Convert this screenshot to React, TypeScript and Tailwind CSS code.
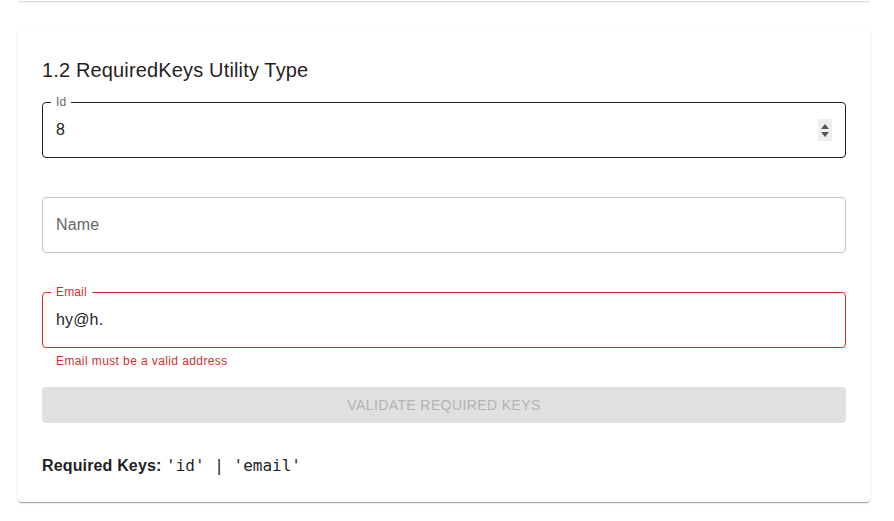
import React from "react";

const sans = "font-['Liberation_Sans',Arial,sans-serif]";

function SpinButtons() {
  return (
    <div className="flex h-[22px] w-[14px] flex-col items-center justify-center gap-[3px] bg-[#eeeeee]">
      <svg width="8" height="5" viewBox="0 0 8 5">
        <path d="M4 0 L8 5 L0 5 Z" fill="#555" />
      </svg>
      <svg width="8" height="5" viewBox="0 0 8 5">
        <path d="M0 0 L8 0 L4 5 Z" fill="#555" />
      </svg>
    </div>
  );
}

interface FieldProps {
  label: string;
  value?: string;
  state?: "hover" | "idle" | "error";
  helper?: string;
  number?: boolean;
}

function Field({ label, value, state = "idle", helper, number }: FieldProps) {
  const borderColor =
    state === "error"
      ? "border-[#d32f2f]"
      : state === "hover"
      ? "border-[#212121]"
      : "border-[#c4c4c4]";
  const labelColor = state === "error" ? "text-[#d32f2f]" : "text-[#666666]";

  return (
    <div className="flex flex-col">
      <div
        className={`relative flex h-[56px] items-center rounded-[4px] border ${borderColor} pl-[13px] pr-[13px]`}
      >
        {value !== undefined ? (
          <>
            <span
              className={`absolute -top-[10px] left-[8px] bg-white px-[5px] text-[12px] leading-[18px] tracking-[0.15px] ${labelColor}`}
            >
              {label}
            </span>
            <span className="flex-1 text-[16px] tracking-[0.15px] text-[#1f1f1f]">
              {value}
            </span>
          </>
        ) : (
          <span className="flex-1 text-[16px] tracking-[0.15px] text-[#666666]">
            {label}
          </span>
        )}
        {number && <SpinButtons />}
      </div>
      <div className="mt-[3px] h-[20px] pl-[14px] text-[12px] leading-[20px] tracking-[0.4px] text-[#d32f2f]">
        {helper}
      </div>
    </div>
  );
}

export default function App() {
  return (
    <div className={`min-h-[521px] bg-white ${sans}`}>
      <div className="flex flex-col gap-[29px] pl-[18px]">
        <div className="h-px w-[852px] rounded-b-[4px] bg-white shadow-[0_2px_1px_-1px_rgba(0,0,0,0.2),0_1px_1px_0_rgba(0,0,0,0.14),0_1px_3px_0_rgba(0,0,0,0.12)]" />

        <div className="flex w-[852px] flex-col gap-4 rounded-[4px] bg-white p-6 shadow-[0_2px_1px_-1px_rgba(0,0,0,0.2),0_1px_1px_0_rgba(0,0,0,0.14),0_1px_3px_0_rgba(0,0,0,0.12)]">
          <h2 className="text-[20px] leading-[32px] tracking-[0.15px] text-[#1f1f1f]">
            1.2 RequiredKeys Utility Type
          </h2>

          <Field label="Id" value="8" state="hover" number />
          <Field label="Name" />
          <Field
            label="Email"
            value="hy@h."
            state="error"
            helper="Email must be a valid address"
          />

          <button
            disabled
            className="flex h-[36px] items-center justify-center rounded-[4px] bg-[#e0e0e0] text-[14px] font-medium uppercase tracking-[0.4px] text-[#b3b3b3]"
          >
            Validate Required Keys
          </button>

          <p className="mt-[15px] text-[16px] leading-[24px] tracking-[0.15px] text-[#1f1f1f]">
            <span className="font-bold">Required Keys:</span>{" "}
            <span className="font-['DejaVu_Sans_Mono',monospace] text-[16px] tracking-normal">
              'id' | 'email'
            </span>
          </p>
        </div>
      </div>
    </div>
  );
}
